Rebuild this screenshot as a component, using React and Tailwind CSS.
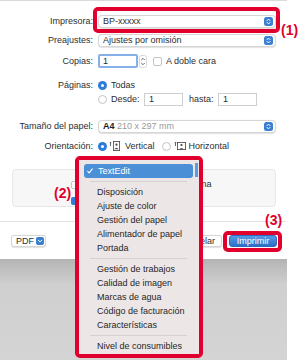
import React from 'react';

const Stepper = () => (
    <span className="flex h-[9px] w-[9px] shrink-0 items-center justify-center rounded-[2.5px] bg-[#3a7fd0]">
        <svg width="9" height="9" viewBox="0 0 9 9" fill="none" stroke="white" strokeWidth="1" strokeLinecap="round" strokeLinejoin="round">
            <path d="M3 3.6 4.5 2.1 6 3.6" />
            <path d="M3 5.4 4.5 6.9 6 5.4" />
        </svg>
    </span>
);

const Popup = ({ children }) => (
    <div className="ml-[5px] flex h-[13px] w-[178px] items-center justify-between rounded-[4px] border border-[#d6d6d6] bg-white pl-[4px] pr-[2px] shadow-[0_0.5px_1px_rgba(0,0,0,0.12)]">
        <span className="truncate">{children}</span>
        <Stepper />
    </div>
);

const Row = ({ label, className, children }) => (
    <div className={`flex items-center ${className}`}>
        <span className="w-[93px] shrink-0 text-right">{label}</span>
        {children}
    </div>
);

const Radio = ({ checked }) =>
    checked ? (
        <span className="ml-[5px] flex h-[9px] w-[9px] shrink-0 items-center justify-center rounded-full bg-[#2f7cd8]">
            <span className="block h-[3px] w-[3px] rounded-full bg-white" />
        </span>
    ) : (
        <span className="ml-[5px] block h-[9px] w-[9px] shrink-0 rounded-full border border-[#c4c4c4] bg-white" />
    );

const Field = () => (
    <div className="flex h-[13px] w-[39px] items-center border border-[#cfcfcf] bg-white pl-[4px]">1</div>
);

const OrientIcon = ({ landscape }) => (
    <svg width="12" height="10" viewBox="0 0 12 10" fill="none" stroke="#444" strokeWidth="0.8">
        <path d="M1.5 1.2V5M0.6 2.1 1.5 1.2 2.4 2.1" />
        {landscape ? (
            <>
                <rect x="3.4" y="1.4" width="8.2" height="7.2" />
                <circle cx="7.5" cy="4" r="1.1" fill="#444" stroke="none" />
                <path d="M5.2 8.4Q7.5 5.4 9.8 8.4Z" fill="#444" stroke="none" />
            </>
        ) : (
            <>
                <rect x="4.4" y="0.4" width="6.2" height="9.2" />
                <circle cx="7.5" cy="3.7" r="1.1" fill="#444" stroke="none" />
                <path d="M5.4 8.3Q7.5 5.2 9.6 8.3Z" fill="#444" stroke="none" />
            </>
        )}
    </svg>
);

const menuGroups = [
    ['Disposición', 'Ajuste de color', 'Gestión del papel', 'Alimentador de papel', 'Portada'],
    ['Gestión de trabajos', 'Calidad de imagen', 'Marcas de agua', 'Código de facturación', 'Características'],
    ['Nivel de consumibles'],
];

const Separator = () => <div className="mx-[6px] my-[3px] h-px bg-[#d8d0d0]" />;

export default function App() {
    return (
        <div className="relative h-[360px] w-[301px] overflow-hidden bg-white font-['Liberation_Sans',Arial,sans-serif] text-[9px] leading-none text-[#2e2e2e]">
            {/* Print dialog */}
            <div className="flex h-[360px] w-[287px] flex-col border-t border-[#dadada]">
                <Row label="Impresora:" className="mt-[14px] h-[13px]">
                    <Popup>BP-xxxxx</Popup>
                </Row>
                <Row label="Preajustes:" className="mt-[6px] h-[13px]">
                    <Popup>Ajustes por omisión</Popup>
                </Row>
                <Row label="Copias:" className="mt-[7px] h-[14px]">
                    <div className="ml-[5px] flex h-[14px] w-[40px] items-center rounded-[2px] border-2 border-[#86b0ea] bg-white pl-[3px]">1</div>
                    <svg className="ml-[1px]" width="8" height="13" viewBox="0 0 8 13" fill="none" stroke="#555" strokeWidth="0.9" strokeLinecap="round">
                        <rect x="0.5" y="0.5" width="7" height="12" rx="2" stroke="#d4d4d4" />
                        <path d="M2.5 4.8 4 3.3 5.5 4.8M2.5 8.2 4 9.7 5.5 8.2" />
                    </svg>
                    <span className="ml-[6px] h-[9px] w-[9px] rounded-[2px] border border-[#c4c4c4] bg-white" />
                    <span className="ml-[4px]">A doble cara</span>
                </Row>
                <Row label="Páginas:" className="mt-[11px] h-[12px]">
                    <Radio checked />
                    <span className="ml-[4px]">Todas</span>
                </Row>
                <Row label="" className="mt-[2px] h-[13px]">
                    <Radio />
                    <span className="ml-[4px] w-[33px]">Desde:</span>
                    <Field />
                    <span className="ml-[6px] w-[29px]">hasta:</span>
                    <Field />
                </Row>
                <Row label="Tamaño del papel:" className="mt-[14px] h-[13px]">
                    <Popup>
                        <span className="font-bold text-[#222]">A4</span>
                        <span className="text-[#9a9a9a]"> 210 x 297 mm</span>
                    </Popup>
                </Row>
                <Row label="Orientación:" className="mt-[7px] h-[12px]">
                    <Radio checked />
                    <span className="ml-[2px] flex"><OrientIcon /></span>
                    <span className="ml-[4px]">Vertical</span>
                    <span className="w-[2px]" />
                    <Radio />
                    <span className="ml-[3px] flex"><OrientIcon landscape /></span>
                    <span className="ml-[3px]">Horizontal</span>
                </Row>

                {/* App options panel, mostly covered by the menu */}
                <div className="ml-[12px] mt-[17px] flex h-[38px] w-[264px] flex-col gap-[7px] rounded-[4px] border border-[#e6e6e6] bg-[#f7f7f7] pl-[58px] pt-[10px]">
                    <div className="flex h-[9px] items-center">
                        <span className="h-[8px] w-[8px] rounded-[2px] border border-[#c6c6c6] bg-white" />
                        <span className="ml-[10px]">Encabezados y pies de página</span>
                    </div>
                    <div className="flex h-[9px] items-center">
                        <span className="h-[8px] w-[8px] rounded-[2px] bg-[#2f7cd8]" />
                    </div>
                </div>

                <div className="mt-[14px] h-px w-[286px] bg-[#e3e3e3]" />

                {/* Bottom buttons */}
                <div className="mt-[13px] flex h-[12px] items-center justify-between pl-[11px] pr-[10px]">
                    <div className="flex h-[12px] w-[35px] items-center justify-between rounded-[3px] border border-[#d6d6d6] bg-white pl-[4px] pr-[1px] shadow-[0_0.5px_1px_rgba(0,0,0,0.12)]">
                        <span>PDF</span>
                        <span className="flex h-[8px] w-[8px] items-center justify-center rounded-[2px] bg-[#3a7fd0]">
                            <svg width="8" height="8" viewBox="0 0 8 8" fill="none" stroke="white" strokeWidth="1" strokeLinecap="round" strokeLinejoin="round">
                                <path d="M2.3 3.2 4 4.9 5.7 3.2" />
                            </svg>
                        </span>
                    </div>
                    <div className="flex items-center gap-[7px]">
                        <div className="flex h-[12px] w-[50px] items-center justify-center rounded-[3px] border border-[#d6d6d6] bg-white shadow-[0_0.5px_1px_rgba(0,0,0,0.12)]">Cancelar</div>
                        <div className="flex h-[12px] w-[48px] items-center justify-center rounded-[3px] border border-[#2d6cc0] bg-linear-to-b from-[#559ae6] to-[#2e6fc6] text-white">Imprimir</div>
                    </div>
                </div>

                {/* Preview */}
                <div className="mt-[12px] w-full flex-1 bg-linear-to-b from-[#b4b4b4] via-[#cfcfcf] via-25% to-[#d4d4d4]" />
            </div>

            {/* Popup menu (2) */}
            <div className="absolute left-[75px] top-[156px] h-[202px] w-[128px] rounded-[5px] border-4 border-[#e1002d]">
                <div className="relative h-full bg-[#ede6e6] pl-[5px] pr-[6px] pt-[4px] text-[#262626]">
                    <div className="absolute right-[1px] top-[3px] h-[14px] w-[3px] bg-[#5b9be0]" />
                    <div className="flex h-[14px] items-center rounded-[3px] bg-[#4b8fd7] pl-[3px] text-white">
                        <svg className="mr-[5px]" width="6" height="6" viewBox="0 0 6 6" fill="none" stroke="white" strokeWidth="1.1" strokeLinecap="round" strokeLinejoin="round">
                            <path d="M0.7 3.3 2.2 4.9 5.3 0.9" />
                        </svg>
                        TextEdit
                    </div>
                    {menuGroups.map((group, i) => (
                        <div key={i}>
                            <Separator />
                            {group.map(item => (
                                <div key={item} className="flex h-[14px] items-center pl-[13px]">{item}</div>
                            ))}
                        </div>
                    ))}
                </div>
            </div>

            {/* Annotation frames */}
            <div className="absolute left-[93px] top-[7px] h-[26px] w-[187px] rounded-[5px] border-4 border-[#e1002d]" />
            <div className="absolute left-[223px] top-[231px] h-[21px] w-[59px] rounded-[5px] border-4 border-[#e1002d]" />
            <span className="absolute left-[281px] top-[23px] text-[14px] font-bold leading-none text-[#e1002d]">(1)</span>
            <span className="absolute left-[54px] top-[186px] text-[14px] font-bold leading-none text-[#e1002d]">(2)</span>
            <span className="absolute left-[265px] top-[213px] text-[14px] font-bold leading-none text-[#e1002d]">(3)</span>
        </div>
    );
}
